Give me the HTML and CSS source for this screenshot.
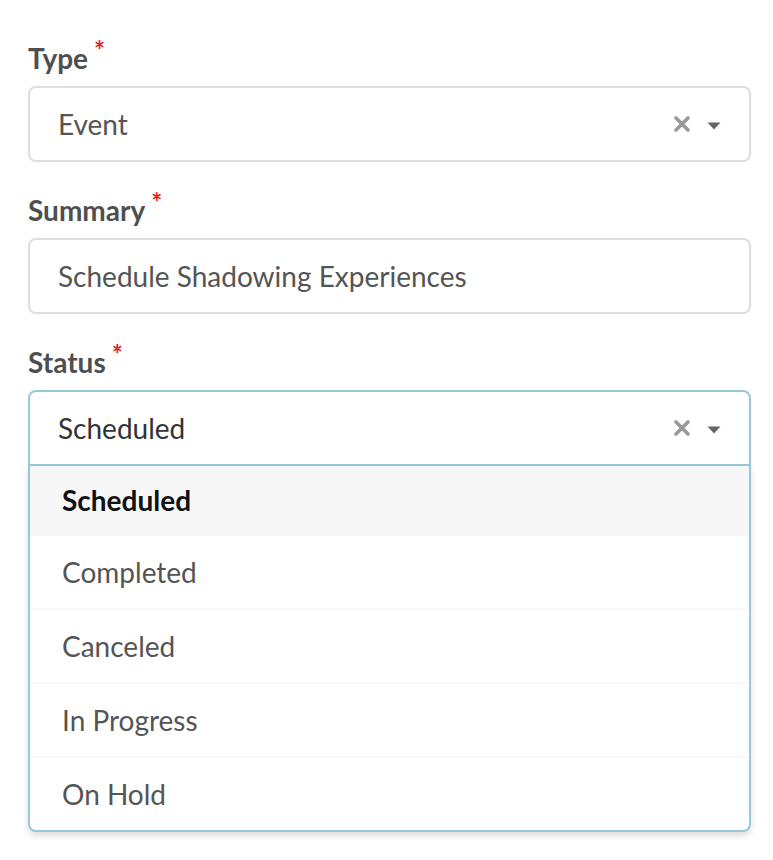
FILE: index.html
```html
<!DOCTYPE html>
<html>
<head>
<meta charset="utf-8">
<link rel="stylesheet" href="styles.css">
</head>
<body>
<form class="form">
  <div class="field">
    <label class="label">Type<span class="req">*</span></label>
    <div class="select">
      <span class="value">Event</span>
      <span class="icons">
        <svg class="clear" width="18" height="18" viewBox="0 0 18 18"><path d="M3 3L15 15M15 3L3 15" stroke="#999" stroke-width="3.6" stroke-linecap="round"/></svg>
        <svg class="caret" width="14" height="8" viewBox="0 0 14 8"><path d="M0.5 0.5H13.5L7 7.5Z" fill="#666"/></svg>
      </span>
    </div>
  </div>
  <div class="field">
    <label class="label">Summary<span class="req">*</span></label>
    <div class="input">Schedule Shadowing Experiences</div>
  </div>
  <div class="field">
    <label class="label">Status<span class="req">*</span></label>
    <div class="dropdown">
      <div class="select active">
        <span class="value dark">Scheduled</span>
        <span class="icons">
          <svg class="clear" width="18" height="18" viewBox="0 0 18 18"><path d="M3 3L15 15M15 3L3 15" stroke="#999" stroke-width="3.6" stroke-linecap="round"/></svg>
          <svg class="caret" width="14" height="8" viewBox="0 0 14 8"><path d="M0.5 0.5H13.5L7 7.5Z" fill="#666"/></svg>
        </span>
      </div>
      <div class="menu">
        <div class="item selected">Scheduled</div>
        <div class="item">Completed</div>
        <div class="item">Canceled</div>
        <div class="item">In Progress</div>
        <div class="item">On Hold</div>
      </div>
    </div>
  </div>
</form>
</body>
</html>
```
FILE: styles.css
```css
html, body {
  margin: 0;
  padding: 0;
  background: #fff;
}
body {
  font-family: Lato, "Noto Sans", sans-serif;
  padding: 38px 22px 0 28px;
}
.form {
  width: 723px;
}
.field {
  margin-bottom: 28px;
}
.label {
  display: block;
  font-size: 28px;
  font-weight: 700;
  line-height: 40px;
  height: 40px;
  color: #4f4f4f;
  margin-bottom: 8px;
}
.req {
  color: #db2828;
  font-size: 26px;
  vertical-align: top;
  position: relative;
  top: -8px;
  margin-left: 6px;
}
.select, .input {
  box-sizing: border-box;
  height: 76px;
  border: 2px solid #dedede;
  border-radius: 8px;
  padding: 0 0 0 28px;
  display: flex;
  align-items: center;
  font-size: 28px;
  color: #555;
}
.select {
  justify-content: space-between;
}
.select.active {
  border-color: #96c8da;
  border-bottom-left-radius: 0;
  border-bottom-right-radius: 0;
}
.value.dark {
  color: #333;
}
.icons {
  display: flex;
  align-items: center;
  gap: 16px;
  padding-right: 28px;
}
.clear {
  display: block;
}
.caret {
  display: block;
  margin-top: 3px;
}
.menu {
  box-sizing: border-box;
  border: 2px solid #96c8da;
  border-top: 0;
  border-radius: 0 0 8px 8px;
  box-shadow: 0 4px 6px 0 rgba(34, 36, 38, 0.15);
  background: #fff;
  overflow: hidden;
}
.item {
  padding: 22px 32px;
  font-size: 28px;
  line-height: 28px;
  color: #555;
  border-top: 2px solid #f7f7f7;
}
.item:first-child {
  border-top: 0;
  padding-top: 20px;
  padding-bottom: 20px;
}
.item.selected {
  background: #f7f7f7;
  color: #111;
  font-weight: 700;
}
```
